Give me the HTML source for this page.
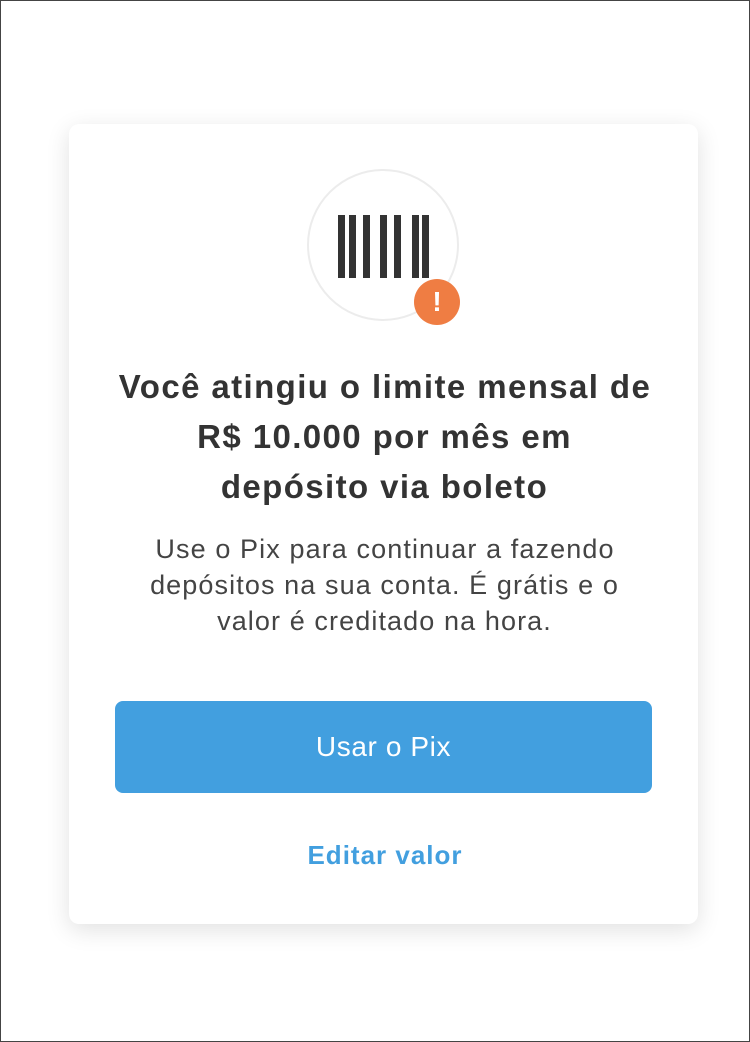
<!DOCTYPE html>
<html><head><meta charset="utf-8"><style>
html,body{margin:0;padding:0}
body{width:750px;height:1042px;background:#fff;position:relative;overflow:hidden;font-family:"Liberation Sans",sans-serif;box-sizing:border-box;border:1px solid #444;}
.card{position:absolute;left:68px;top:123px;width:629px;height:800px;background:#fff;border-radius:10px;box-shadow:0 6px 24px rgba(0,0,0,0.12);}
.circ{position:absolute;left:306px;top:168px;width:152px;height:152px;border:2px solid #ececec;border-radius:50%;box-sizing:border-box}
.bar{position:absolute;top:214px;width:7px;height:63px;background:#333}
.warn{position:absolute;left:413px;top:278px;width:46px;height:46px;border-radius:50%;background:#ef7d43;color:#fff;font-weight:bold;font-size:28px;text-align:center;line-height:46px}
.t{position:absolute;left:68px;width:631px;text-align:center;color:#333;text-indent:1px}
h1{margin:0;font-size:33px;letter-spacing:1.4px;font-weight:bold;line-height:50px;color:#333}
.btn{position:absolute;left:114px;top:700px;width:537px;height:92px;background:#429fdf;border-radius:8px;color:#fff;font-size:28px;letter-spacing:0.6px;text-align:center;line-height:92px}
</style></head><body>
<div class="card"></div>
<div class="circ"></div>
<div class="bar" style="left:337px"></div><div class="bar" style="left:348px"></div><div class="bar" style="left:362px"></div><div class="bar" style="left:379px"></div><div class="bar" style="left:393px"></div><div class="bar" style="left:411px"></div><div class="bar" style="left:421px"></div>
<div class="warn">!</div>
<div class="t" style="top:361px"><h1>Você atingiu o limite mensal de<br>R$ 10.000 por mês em<br>depósito via boleto</h1></div>
<div class="t" style="top:530px;font-size:27px;letter-spacing:1.1px;line-height:36px;color:#444">Use o Pix para continuar a fazendo<br>depósitos na sua conta. É grátis e o<br>valor é creditado na hora.</div>
<div class="btn">Usar o Pix</div>
<div class="t" style="top:839px;font-size:26px;letter-spacing:1px;font-weight:bold;color:#429fdf">Editar valor</div>
</body></html>
